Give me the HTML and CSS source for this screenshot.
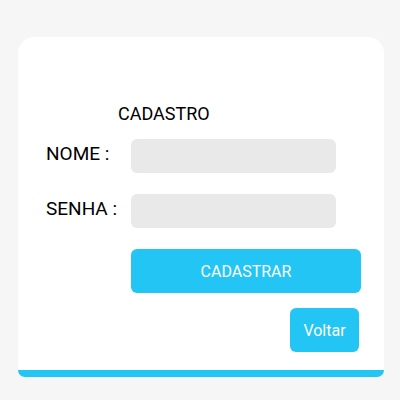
FILE: index.html
```html
<!DOCTYPE html>
<html lang="pt">
<head>
<meta charset="utf-8">
<link rel="stylesheet" href="styles.css">
</head>
<body>
<div class="card">
  <h1 class="title">CADASTRO</h1>
  <div class="row">
    <label class="label">NOME :</label>
    <div class="input"></div>
  </div>
  <div class="row">
    <label class="label">SENHA :</label>
    <div class="input"></div>
  </div>
  <div class="row">
    <span class="spacer"></span>
    <button class="btn-main">CADASTRAR</button>
  </div>
  <div class="back-row">
    <button class="btn-back">Voltar</button>
  </div>
</div>
</body>
</html>
```

FILE: styles.css
```css
html, body {
  margin: 0;
  padding: 0;
  background: #f6f6f6;
  font-family: Roboto, "Liberation Sans", sans-serif;
}
.card {
  box-sizing: border-box;
  margin: 37px 0 0 18px;
  width: 366px;
  height: 340px;
  background: #ffffff;
  border-radius: 16px 16px 7px 7px;
  border-bottom: 7px solid #22c5f3;
  padding: 68px 0 0 28px;
  display: flex;
  flex-direction: column;
}
.title {
  margin: 0 0 16px 72px;
  font-size: 18px;
  line-height: 18px;
  font-weight: 400;
  color: #000;
}
.row {
  display: flex;
  align-items: center;
  margin-bottom: 21px;
}
.label {
  width: 85px;
  font-size: 19px;
  line-height: 19px;
  color: #000;
  margin-bottom: 6px;
}
.spacer {
  width: 85px;
}
.input {
  width: 205px;
  height: 34px;
  border-radius: 6px;
  background: #e9e9e9;
}
.btn-main {
  width: 230px;
  height: 44px;
  border: none;
  border-radius: 6px;
  background: #22c5f3;
  color: #fff;
  font-family: inherit;
  font-size: 16px;
  padding: 0;
}
.back-row {
  display: flex;
  justify-content: flex-end;
  padding-right: 25px;
  margin-top: -6px;
}
.btn-back {
  width: 69px;
  height: 44px;
  border: none;
  border-radius: 6px;
  background: #22c5f3;
  color: #fff;
  font-family: inherit;
  font-size: 16px;
  padding: 0;
}
```
